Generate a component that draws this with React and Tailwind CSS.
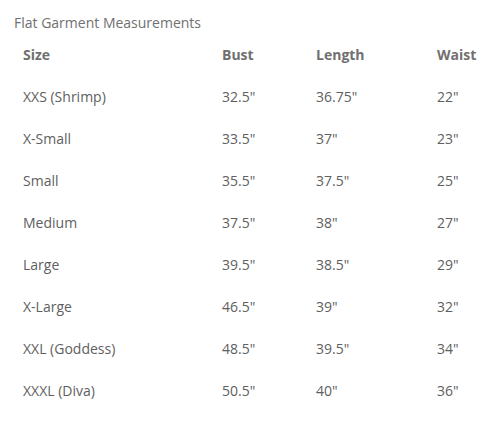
import React from "react";

const rows = [
  ["XXS (Shrimp)", '32.5"', '36.75"', '22"'],
  ["X-Small", '33.5"', '37"', '23"'],
  ["Small", '35.5"', '37.5"', '25"'],
  ["Medium", '37.5"', '38"', '27"'],
  ["Large", '39.5"', '38.5"', '29"'],
  ["X-Large", '46.5"', '39"', '32"'],
  ["XXL (Goddess)", '48.5"', '39.5"', '34"'],
  ["XXXL (Diva)", '50.5"', '40"', '36"'],
];

const App = () => {
  return (
    <div
      className="w-[495px] h-[427px] bg-white text-[14px] text-[#606060]"
      style={{ fontFamily: '"Open Sans", sans-serif' }}
    >
      <div className="pt-[13px] pl-[14px] leading-[20px] text-[#707070]">
        Flat Garment Measurements
      </div>
      {/* header */}
      <div className="grid grid-cols-[199px_94px_121px_1fr] pl-[23px] h-[42px] items-center font-bold text-[#707070]">
        <div>Size</div>
        <div>Bust</div>
        <div>Length</div>
        <div>Waist</div>
      </div>
      {rows.map((r) => (
        <div
          key={r[0]}
          className="grid grid-cols-[199px_94px_121px_1fr] pl-[23px] h-[42px] items-center"
        >
          {r.map((c, i) => (
            <div key={i}>{c}</div>
          ))}
        </div>
      ))}
    </div>
  );
};

export default App;
